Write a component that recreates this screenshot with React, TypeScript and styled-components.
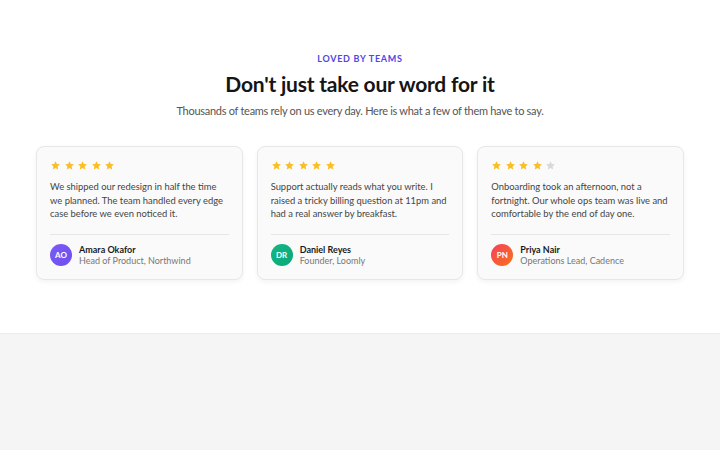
import styled, { createGlobalStyle } from "styled-components";

const GlobalStyle = createGlobalStyle`
  html, body {
    margin: 0;
    padding: 0;
    background: #f5f5f5;
    font-family: Lato, "Noto Sans", sans-serif;
  }
`;

interface Testimonial {
  quote: string;
  name: string;
  role: string;
  initials: string;
  rating: number;
  color: string;
}

const testimonials: Testimonial[] = [
  {
    quote:
      "We shipped our redesign in half the time we planned. The team handled every edge case before we even noticed it.",
    name: "Amara Okafor",
    role: "Head of Product, Northwind",
    initials: "AO",
    rating: 5,
    color: "linear-gradient(135deg, #7c5cf5, #6d4ef0)",
  },
  {
    quote:
      "Support actually reads what you write. I raised a tricky billing question at 11pm and had a real answer by breakfast.",
    name: "Daniel Reyes",
    role: "Founder, Loomly",
    initials: "DR",
    rating: 5,
    color: "linear-gradient(135deg, #12b886, #0ca678)",
  },
  {
    quote:
      "Onboarding took an afternoon, not a fortnight. Our whole ops team was live and comfortable by the end of day one.",
    name: "Priya Nair",
    role: "Operations Lead, Cadence",
    initials: "PN",
    rating: 4,
    color: "linear-gradient(135deg, #f43f5e, #f97316)",
  },
];

function Star({ filled }: { filled: boolean }) {
  return (
    <StarIcon viewBox="0 0 24 24" $filled={filled}>
      <path d="M12 2.5l2.9 6.1 6.6.8-4.9 4.6 1.3 6.6L12 17.3l-5.9 3.3 1.3-6.6-4.9-4.6 6.6-.8z" />
    </StarIcon>
  );
}

export default function App() {
  return (
    <>
      <GlobalStyle />
      <Section>
        <Eyebrow>Loved by teams</Eyebrow>
        <Title>Don't just take our word for it</Title>
        <Lead>
          Thousands of teams rely on us every day. Here is what a few of them have to say.
        </Lead>
        <Grid>
          {testimonials.map((t) => (
            <Card key={t.name}>
              <Stars>
                {[0, 1, 2, 3, 4].map((i) => (
                  <Star key={i} filled={i < t.rating} />
                ))}
              </Stars>
              <Quote>{t.quote}</Quote>
              <Author>
                <Avatar $bg={t.color}>{t.initials}</Avatar>
                <div>
                  <Name>{t.name}</Name>
                  <Role>{t.role}</Role>
                </div>
              </Author>
            </Card>
          ))}
        </Grid>
      </Section>
    </>
  );
}

const Section = styled.section`
  background: #ffffff;
  border-bottom: 1px solid #ececec;
  padding: 53px 36px 53px;
  display: flex;
  flex-direction: column;
  align-items: center;
`;

const Eyebrow = styled.div`
  font-size: 9px;
  font-weight: 700;
  letter-spacing: 0.08em;
  text-transform: uppercase;
  color: #4f46e5;
  line-height: 12px;
`;

const Title = styled.h2`
  margin: 5px 0 0;
  font-size: 21px;
  font-weight: 700;
  letter-spacing: -0.01em;
  color: #151515;
  line-height: 28px;
`;

const Lead = styled.p`
  margin: 5px 0 0;
  font-size: 11px;
  letter-spacing: -0.28px;
  color: #555555;
  line-height: 16px;
`;

const Grid = styled.div`
  margin-top: 27px;
  width: 100%;
  display: grid;
  grid-template-columns: repeat(3, 1fr);
  gap: 14px;
`;

const Card = styled.div`
  background: #fafafa;
  border: 1px solid #e7e7e7;
  border-radius: 8px;
  box-shadow: 0 2px 5px rgba(0, 0, 0, 0.05);
  padding: 13px;
  display: flex;
  flex-direction: column;
`;

const Stars = styled.div`
  display: flex;
  gap: 2.5px;
`;

const StarIcon = styled.svg<{ $filled: boolean }>`
  width: 11px;
  height: 11px;
  fill: ${(p) => (p.$filled ? "#fbbf24" : "#d9d9d9")};
`;

const Quote = styled.p`
  margin: 9px 0 0;
  font-size: 9.4px;
  line-height: 13.5px;
  color: #454545;
  padding-bottom: 13px;
  border-bottom: 1px solid #e6e6e6;
`;

const Author = styled.div`
  margin-top: 9px;
  display: flex;
  align-items: center;
  gap: 7px;
`;

const Avatar = styled.div<{ $bg: string }>`
  width: 22px;
  height: 22px;
  border-radius: 50%;
  background: ${(p) => p.$bg};
  color: #ffffff;
  font-size: 8px;
  font-weight: 700;
  display: flex;
  align-items: center;
  justify-content: center;
  flex-shrink: 0;
`;

const Name = styled.div`
  font-size: 9px;
  font-weight: 700;
  color: #1a1a1a;
  line-height: 11px;
`;

const Role = styled.div`
  font-size: 9px;
  color: #777777;
  line-height: 11px;
`;
